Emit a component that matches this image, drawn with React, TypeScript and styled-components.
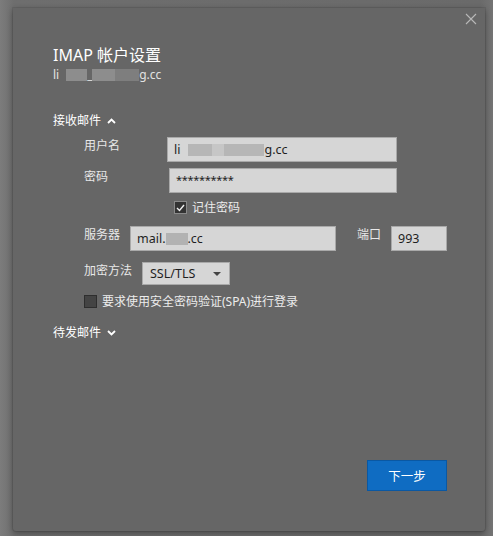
import styled, { createGlobalStyle } from 'styled-components';

const GlobalStyle = createGlobalStyle`
  html, body {
    margin: 0;
    padding: 0;
    background: #727272;
    font-family: "Noto Sans", "Noto Sans CJK SC", sans-serif;
  }
  #root {
    width: 493px;
    height: 536px;
    overflow: hidden;
  }
`;

const Screen = styled.div`
  width: 493px;
  height: 536px;
  padding: 8px 8px 4px 13px;
  box-sizing: border-box;
  background: linear-gradient(90deg, #7c7c7c 0px, #6e6e6e 14px, #6a6a6a 480px, #747474 493px);
`;

const Dialog = styled.div`
  position: relative;
  width: 472px;
  height: 523px;
  box-sizing: border-box;
  background: #666666;
  border-radius: 0 0 3px 3px;
  box-shadow: 0 2px 6px rgba(0, 0, 0, 0.35), 0 0 0 1px rgba(0, 0, 0, 0.08);
  padding: 37px 38px 40px 40px;
  display: flex;
  flex-direction: column;
  color: #ececec;
`;

const CloseButton = styled.button`
  position: absolute;
  top: 5px;
  right: 8px;
  width: 12px;
  height: 12px;
  padding: 0;
  border: none;
  background: none;
  cursor: pointer;
  display: flex;
`;

const Title = styled.div`
  font-size: 16px;
  line-height: 20px;
  color: #ffffff;
`;

const Account = styled.div`
  margin-top: 2px;
  font-size: 12px;
  line-height: 16px;
  color: #e2e2e2;
  display: flex;
  align-items: center;
`;

const Redact = styled.span<{ $w: number; $tone: string; $h?: number }>`
  display: inline-block;
  width: ${({ $w }) => $w}px;
  height: ${({ $h }) => $h ?? 12}px;
  background: ${({ $tone }) => $tone};
  filter: blur(0.6px);
`;

const SectionHeader = styled.div<{ $top: number }>`
  margin-top: ${({ $top }) => $top}px;
  font-size: 12px;
  line-height: 16px;
  color: #ffffff;
  display: flex;
  align-items: center;
  gap: 6px;
`;

const Form = styled.div`
  margin-left: 31px;
  display: flex;
  flex-direction: column;
`;

const Row = styled.div<{ $top: number }>`
  margin-top: ${({ $top }) => $top}px;
  display: flex;
  align-items: flex-start;
`;

const Label = styled.div<{ $w: number; $offset?: number }>`
  width: ${({ $w }) => $w}px;
  flex: none;
  font-size: 12px;
  line-height: 16px;
  padding-top: ${({ $offset }) => $offset ?? 1}px;
  color: #e8e8e8;
`;

const Field = styled.div<{ $w: number; $h?: number }>`
  width: ${({ $w }) => $w}px;
  height: ${({ $h }) => $h ?? 25}px;
  box-sizing: border-box;
  background: #d6d6d6;
  border: 1px solid #a9a9a9;
  padding: 0 6px;
  display: flex;
  align-items: center;
  font-size: 12.5px;
  color: #1e1e1e;
  flex: none;
`;

const Secret = styled.span`
  font-size: 11px;
  letter-spacing: -0.3px;
  margin-top: -2px;
`;

const Select = styled(Field)`
  justify-content: space-between;
  padding: 0 8px 0 7px;
`;

const CheckRow = styled.label<{ $top: number; $indent: number }>`
  margin-top: ${({ $top }) => $top}px;
  margin-left: ${({ $indent }) => $indent}px;
  display: flex;
  align-items: center;
  gap: 5px;
  font-size: 12px;
  line-height: 15px;
  color: #ececec;
`;

const Box = styled.span<{ $checked?: boolean }>`
  width: 13px;
  height: 13px;
  box-sizing: border-box;
  border: 1px solid ${({ $checked }) => ($checked ? '#8a8a8a' : '#2e2e2e')};
  background: ${({ $checked }) => ($checked ? '#333333' : '#444444')};
  display: flex;
  align-items: center;
  justify-content: center;
  flex: none;
`;

const Footer = styled.div`
  margin-top: auto;
  display: flex;
  justify-content: flex-end;
`;

const NextButton = styled.button`
  width: 80px;
  height: 31px;
  box-sizing: border-box;
  background: #0f6cc2;
  border: 1px solid #0a58a3;
  color: #ffffff;
  font-family: inherit;
  font-size: 12.5px;
  cursor: pointer;
`;

const Chevron = ({ up }: { up?: boolean }) => (
  <svg width="9" height="6" viewBox="0 0 9 6">
    <polyline
      points={up ? '1,5 4.5,1.5 8,5' : '1,1 4.5,4.5 8,1'}
      fill="none"
      stroke="#ffffff"
      strokeWidth="1.8"
    />
  </svg>
);

export default function App() {
  return (
    <>
      <GlobalStyle />
      <Screen>
        <Dialog>
          <CloseButton aria-label="关闭">
            <svg width="12" height="12" viewBox="0 0 12 12">
              <path d="M1 1 L11 11 M11 1 L1 11" stroke="#b8b8b8" strokeWidth="1.1" />
            </svg>
          </CloseButton>

          <Title>IMAP 帐户设置</Title>
          <Account>
            li
            <Redact $w={7} $tone="transparent" />
            <Redact $w={21} $tone="#8d8d8d" />
            <span style={{ width: 5 }}>_</span>
            <Redact $w={23} $tone="#8d8d8d" />
            <Redact $w={24} $tone="#7e7e7e" />
            g.cc
          </Account>

          <SectionHeader $top={30}>
            接收邮件 <Chevron up />
          </SectionHeader>

          <Form>
            <Row $top={8}>
              <Label $w={83}>用户名</Label>
              <Field $w={230}>
                li
                <Redact $w={8} $tone="transparent" />
                <Redact $w={24} $tone="#b6b6b6" />
                <Redact $w={12} $tone="#c6c6c6" />
                <Redact $w={40} $tone="#b6b6b6" />
                g.cc
              </Field>
            </Row>
            <Row $top={6}>
              <Label $w={85}>密码</Label>
              <Field $w={228}>
                <Secret>**********</Secret>
              </Field>
            </Row>
            <CheckRow $top={7} $indent={90}>
              <Box $checked>
                <svg width="9" height="8" viewBox="0 0 9 8">
                  <polyline points="1,4 3.5,6.5 8,1" fill="none" stroke="#f0f0f0" strokeWidth="1.4" />
                </svg>
              </Box>
              记住密码
            </CheckRow>
            <Row $top={11}>
              <Label $w={46}>服务器</Label>
              <Field $w={206}>
                mail.
                <Redact $w={22} $tone="#b2b2b2" />
                .cc
              </Field>
              <Label $w={34} style={{ marginLeft: 21 }}>
                端口
              </Label>
              <Field $w={56}>993</Field>
            </Row>
            <Row $top={11}>
              <Label $w={58}>加密方法</Label>
              <Select $w={88} $h={23}>
                SSL/TLS
                <svg width="8" height="4" viewBox="0 0 8 4">
                  <polygon points="0,0 8,0 4,4" fill="#444444" />
                </svg>
              </Select>
            </Row>
            <CheckRow $top={9} $indent={0}>
              <Box />
              要求使用安全密码验证(SPA)进行登录
            </CheckRow>
          </Form>

          <SectionHeader $top={16}>
            待发邮件 <Chevron />
          </SectionHeader>

          <Footer>
            <NextButton>下一步</NextButton>
          </Footer>
        </Dialog>
      </Screen>
    </>
  );
}
